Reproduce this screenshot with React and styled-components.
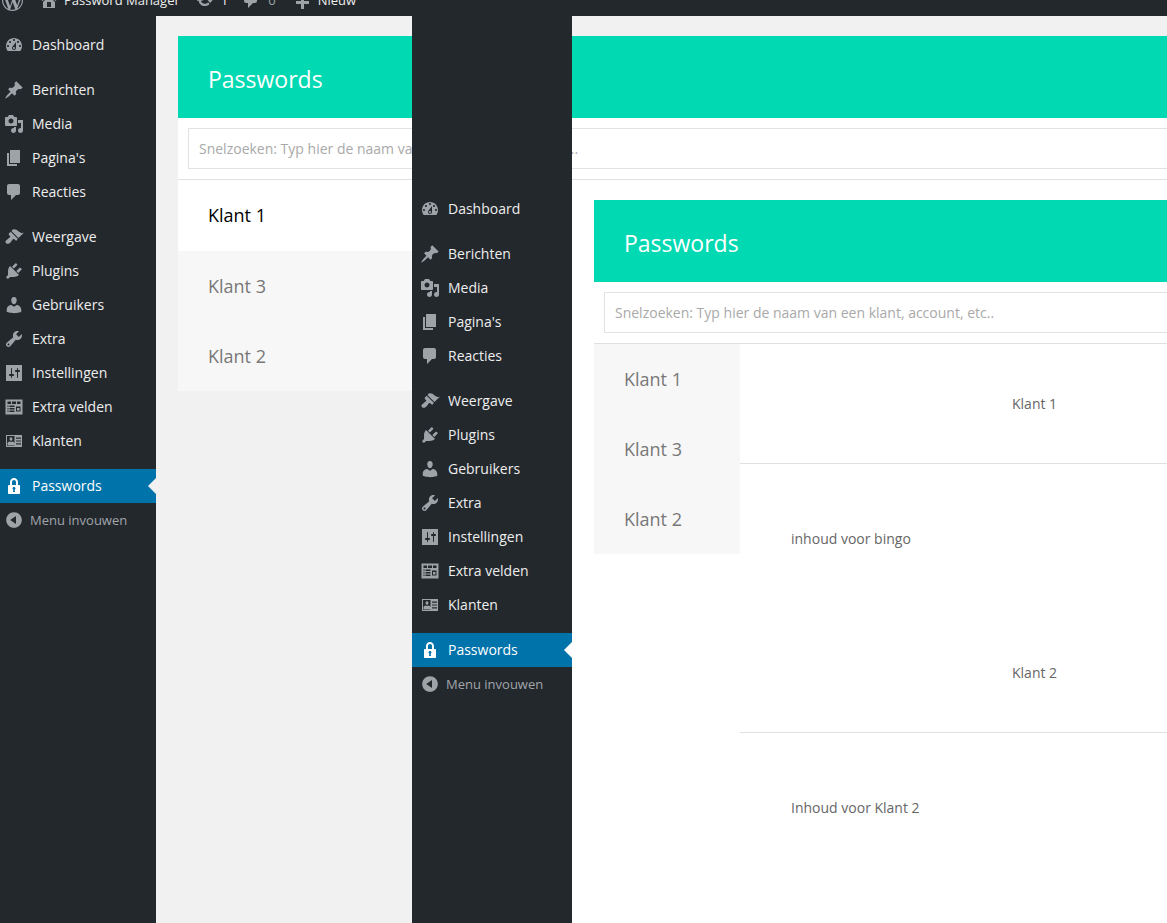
import styled, { createGlobalStyle } from "styled-components";

const ICONS = {
  wordpress:
    "M20 10c0-5.51-4.49-10-10-10C4.48 0 0 4.49 0 10c0 5.52 4.48 10 10 10 5.51 0 10-4.48 10-10zM7.78 15.37L4.37 6.22c.55-.02 1.17-.08 1.17-.08.5-.06.44-1.13-.06-1.11 0 0-1.45.11-2.37.11-.18 0-.37 0-.58-.01C4.12 2.69 6.87 1.11 10 1.11c2.33 0 4.45.87 6.05 2.34-.68-.11-1.65.39-1.65 1.58 0 .74.45 1.36.9 2.1.35.61.55 1.36.55 2.46 0 1.49-1.4 5-1.4 5l-3.03-8.37c.54-.02.82-.17.82-.17.5-.05.44-1.25-.06-1.22 0 0-1.44.12-2.38.12-.87 0-2.33-.12-2.33-.12-.5-.03-.56 1.2-.06 1.22l.92.08 1.26 3.41zM17.41 10c.24-.64.74-1.87.43-4.25.7 1.29 1.05 2.71 1.05 4.25 0 3.29-1.73 6.24-4.4 7.78.97-2.59 1.94-5.2 2.92-7.78zM6.1 18.09C3.12 16.65 1.11 13.53 1.11 10c0-1.3.23-2.48.72-3.59C3.25 10.3 4.67 14.2 6.1 18.09zm4.03-6.63l2.58 6.98c-.86.29-1.76.45-2.71.45-.79 0-1.57-.11-2.29-.33.81-2.38 1.62-4.74 2.42-7.1z",
  home: "M16 8.5l1.53 1.53-1.06 1.06L10 4.62l-6.47 6.47-1.06-1.06L10 2.5l4 4v-2h2v4zm-6-2.46l6 5.99V18H4v-5.97zM12 17v-5H8v5h4z",
  update:
    "M10.2 3.28c3.53 0 6.43 2.61 6.92 6h2.08l-3.5 4-3.5-4h2.32c-.45-1.97-2.21-3.44-4.32-3.44-1.45 0-2.73.71-3.54 1.78L4.95 5.66C6.23 4.2 8.11 3.28 10.2 3.28zm-.4 13.44c-3.52 0-6.43-2.61-6.92-6H.8l3.5-4c1.17 1.33 2.33 2.67 3.5 4H5.48c.45 1.97 2.21 3.44 4.32 3.44 1.45 0 2.73-.71 3.54-1.78l1.71 1.95c-1.28 1.46-3.15 2.39-5.25 2.39z",
  comment: "M5 2h9c1.1 0 2 .9 2 2v7c0 1.1-.9 2-2 2h-2l-5 5v-5H5c-1.1 0-2-.9-2-2V4c0-1.1.9-2 2-2z",
  plus: "M17 7v3h-5v5H9v-5H4V7h5V2h3v5h5z",
  dashboard:
    "M3.76 16h12.48c1.1-1.37 1.76-3.11 1.76-5 0-4.42-3.58-8-8-8s-8 3.58-8 8c0 1.89.66 3.63 1.76 5zM10 4c.55 0 1 .45 1 1s-.45 1-1 1-1-.45-1-1 .45-1 1-1zM6 6c.55 0 1 .45 1 1s-.45 1-1 1-1-.45-1-1 .45-1 1-1zm8 0c.55 0 1 .45 1 1s-.45 1-1 1-1-.45-1-1 .45-1 1-1zm-5.37 5.55L12 7v6c0 1.1-.9 2-2 2s-2-.9-2-2c0-.57.24-1.08.63-1.45zM4 10c.55 0 1 .45 1 1s-.45 1-1 1-1-.45-1-1 .45-1 1-1zm12 0c.55 0 1 .45 1 1s-.45 1-1 1-1-.45-1-1 .45-1 1-1zm-5 3c0-.55-.45-1-1-1s-1 .45-1 1 .45 1 1 1 1-.45 1-1z",
  pin: "M10.44 3.02l1.82-1.82 6.36 6.35-1.83 1.82c-1.05-.68-2.48-.57-3.41.36l-.75.75c-.92.93-1.04 2.35-.35 3.41l-1.83 1.82-2.41-2.41-2.8 2.79c-.42.42-3.38 2.71-3.8 2.29s1.86-3.39 2.28-3.81l2.79-2.79L4.1 9.36l1.83-1.82c1.05.69 2.48.57 3.4-.36l.75-.75c.93-.92 1.05-2.35.36-3.41z",
  media:
    "M13 11V4c0-.55-.45-1-1-1h-1.67L9 1H5L3.67 3H2c-.55 0-1 .45-1 1v7c0 .55.45 1 1 1h10c.55 0 1-.45 1-1zM7 4.5c1.38 0 2.5 1.12 2.5 2.5S8.38 9.5 7 9.5 4.5 8.38 4.5 7 5.62 4.5 7 4.5zM14 6h5v10.5c0 1.38-1.12 2.5-2.5 2.5S14 17.88 14 16.5s1.12-2.5 2.5-2.5c.17 0 .34.02.5.05V9h-3V6zm-4 8.05V13h2v3.5c0 1.38-1.12 2.5-2.5 2.5S7 17.88 7 16.5 8.12 14 9.5 14c.17 0 .34.02.5.05z",
  page: "M6 15V2h10v13H6zm-1 1h8v2H3V5h2v11z",
  brush:
    "M14.48 11.06L7.41 3.99l1.5-1.5c.5-.56 2.3-.47 3.51.32 1.21.8 1.43 1.28 2.91 2.1 1.18.64 2.45 1.26 4.45.85zm-.71.71L6.7 4.7 4.93 6.47c-.39.39-.39 1.02 0 1.41l1.06 1.06c.39.39.39 1.03 0 1.42-.6.6-1.43 1.11-2.21 1.69-.35.26-.7.53-1.01.84C1.43 13.23.91 15.01 2.1 16.2c1.19 1.19 2.97.67 4.31-.68.31-.31.58-.66.84-1.01.58-.78 1.09-1.61 1.69-2.21.39-.39 1.02-.39 1.41 0l1.06 1.06c.39.39 1.02.39 1.41 0z",
  plug: "M13.11 4.36L9.87 7.6 8 5.73l3.24-3.24c.35-.34 1.05-.2 1.56.32.52.51.66 1.21.31 1.55zm-8 1.77l.91-1.12 9.01 9.01-1.19.84c-.71.71-2.63 1.16-3.82 1.16H6.14L4.9 17.26c-.59.59-1.54.59-2.12 0-.59-.58-.59-1.53 0-2.12l1.24-1.24v-3.88c0-1.13.4-3.19 1.09-3.89zm7.26 3.97l3.24-3.24c.34-.35 1.04-.21 1.55.31.52.51.66 1.21.31 1.55l-3.24 3.25z",
  user: "M10 9.25c-2.27 0-2.73-3.44-2.73-3.44C7 4.02 7.82 2 9.97 2c2.16 0 2.98 2.02 2.71 3.81 0 0-.41 3.44-2.68 3.44zm0 2.57L12.72 10c2.39 0 4.52 2.33 4.52 4.53v2.49s-3.65 1.13-7.24 1.13c-3.65 0-7.24-1.13-7.24-1.13v-2.49c0-2.25 1.94-4.48 4.47-4.48z",
  wrench:
    "M16.68 9.77c-1.34 1.34-3.3 1.67-4.95.99l-5.41 6.52c-.99.99-2.59.99-3.58 0s-.99-2.59 0-3.57l6.52-5.42c-.68-1.65-.35-3.61.99-4.95 1.28-1.28 3.12-1.62 4.72-1.06l-2.89 2.89 2.82 2.82 2.86-2.87c.53 1.58.18 3.39-1.08 4.65zM3.81 16.21c.4.39 1.04.39 1.43 0 .4-.4.4-1.04 0-1.43-.39-.4-1.03-.4-1.43 0-.39.39-.39 1.03 0 1.43z",
  settings:
    "M18 18V2H2v16h16zM8 11h1c.55 0 1 .45 1 1s-.45 1-1 1H8v1.5c0 .28-.22.5-.5.5s-.5-.22-.5-.5V13H6c-.55 0-1-.45-1-1s.45-1 1-1h1V5.5c0-.28.22-.5.5-.5s.5.22.5.5V11zm5-2h-1c-.55 0-1-.45-1-1s.45-1 1-1h1V5.5c0-.28.22-.5.5-.5s.5.22.5.5V7h1c.55 0 1 .45 1 1s-.45 1-1 1h-1v5.5c0 .28-.22.5-.5.5s-.5-.22-.5-.5V9z",
  table:
    "M1.5 2.5h17v15h-17v-15zM3.5 4.5v2.5h3.500V4.500H3.500zM8 4.500V7h4V4.500H8zM13 4.500V7h3.500V4.500H13zM3.500 8.500v1.500h1V8.500h-1zM5.500 8.500v1.500h5V8.500h-5zM3.500 11v1.500h1V11h-1zM5.500 11v1.500h5V11h-5zM3.500 13.500V15h1v-1.500h-1zM5.500 13.500V15h5v-1.500h-5zM12 9.500v5h4.500v-5H12zM13 11h2.500v2.500H13V11z",
  idcard:
    "M2 4h16v12H2V4zM3 5v10h7.500V5H3zM7 6.200c1 0 1.600.9 1.400 2-.1.8-.6 1.500-1.400 1.500s-1.300-.7-1.400-1.500c-.2-1.100.4-2 1.400-2zM3.500 14.500v-2.100c0-1 1-2 2-2l1.500.6 1.500-.6c1 0 2 1 2 2v2.100h-7zM12 6.500h5v1.200h-5V6.500zM12 9.400h5v1.200h-5V9.400zM12 12.300h5v1.200h-5v-1.200z",
  lock: "M14 9h1c.55 0 1 .45 1 1v7c0 .55-.45 1-1 1H5c-.55 0-1-.45-1-1v-7c0-.55.45-1 1-1h1V6c0-2.2 1.8-4 4-4s4 1.8 4 4v3zm-2 0V6c0-1.1-.9-2-2-2s-2 .9-2 2v3h4zm-1 7l-.36-2.15c.51-.24.86-.75.86-1.35 0-.83-.67-1.5-1.5-1.5s-1.5.67-1.5 1.5c0 .6.35 1.11.86 1.35L9 16h2z",
  collapse:
    "M10 2.16c4.33 0 7.84 3.51 7.84 7.84s-3.51 7.84-7.84 7.84S2.16 14.33 2.16 10 5.71 2.16 10 2.16zm2 11.72V6.12L6.18 9.97z",
};

const MENU = [
  [{ icon: "dashboard", label: "Dashboard" }],
  [
    { icon: "pin", label: "Berichten" },
    { icon: "media", label: "Media" },
    { icon: "page", label: "Pagina's" },
    { icon: "comment", label: "Reacties" },
  ],
  [
    { icon: "brush", label: "Weergave" },
    { icon: "plug", label: "Plugins" },
    { icon: "user", label: "Gebruikers" },
    { icon: "wrench", label: "Extra" },
    { icon: "settings", label: "Instellingen" },
    { icon: "table", label: "Extra velden" },
    { icon: "idcard", label: "Klanten" },
  ],
];

const CLIENTS = ["Klant 1", "Klant 3", "Klant 2"];

const GlobalStyle = createGlobalStyle`
  html, body {
    margin: 0;
    height: 100%;
    overflow: hidden;
    background: #fff;
    font-family: "Open Sans", "Liberation Sans", sans-serif;
  }
`;

const Page = styled.div`
  position: relative;
  height: 939px;
  margin-top: -16px;
`;

const AdminBar = styled.header`
  display: flex;
  align-items: center;
  height: 32px;
  background: #23282d;
  font-size: 13px;
`;

const BarItem = styled.span`
  display: flex;
  align-items: center;
  gap: ${(p) => p.$gap}px;
  margin-left: ${(p) => p.$left}px;
  color: ${(p) => (p.$dim ? "#9ea3a8" : "#eee")};
  white-space: nowrap;
`;

const Icon = styled.svg`
  flex: none;
  width: ${(p) => p.$size || 20}px;
  height: ${(p) => p.$size || 20}px;
  margin-top: ${(p) => p.$drop || 0}px;
  fill: ${(p) => p.$color || "#9ea3a8"};
`;

const Screen = styled.div`
  display: flex;
  height: 907px;
`;

const Overlay = styled(Screen)`
  position: absolute;
  top: 32px;
  left: 412px;
  right: 0;
`;

const Sidebar = styled.nav`
  flex: none;
  width: 160px;
  margin-left: ${(p) => p.$shift || 0}px;
  padding-top: ${(p) => p.$top}px;
  background: #23282d;
  box-sizing: border-box;
`;

const MenuGroup = styled.ul`
  margin: 0 0 ${(p) => (p.$last ? 0 : 11)}px;
  padding: 0;
  list-style: none;
`;

const MenuItem = styled.li`
  position: relative;
  display: flex;
  align-items: center;
  height: 34px;
  padding-left: 8px;
  gap: 8px;
  font-size: 14px;
  background: ${(p) => (p.$active ? "#0073aa" : "transparent")};
  color: ${(p) => (p.$active ? "#fff" : "#eee")};
`;

const MenuLabel = styled.span`
  padding-bottom: 2px;
`;

const Notch = styled.span`
  position: absolute;
  right: 0;
  top: 50%;
  margin-top: -8px;
  border: 8px solid transparent;
  border-left-width: 0;
  border-right-color: ${(p) => p.$color};
`;

const CollapseRow = styled(MenuItem)`
  gap: 6px;
  font-size: 13px;
  color: #a0a5aa;
`;

const Main = styled.main`
  flex: 1;
  min-width: 0;
  overflow: hidden;
  box-sizing: border-box;
  margin-top: ${(p) => p.$top || 0}px;
  padding: 20px 0 0 22px;
  background: ${(p) => p.$bg};
`;

const Panel = styled.section`
  margin-right: -40px;
`;

const PanelHeader = styled.div`
  display: flex;
  align-items: center;
  box-sizing: border-box;
  height: 82px;
  padding: 3px 0 0 30px;
  background: #00d9b2;
  color: #fff;
  font-size: 23px;
`;

const SearchRow = styled.div`
  padding: 10px;
  background: #fff;
  border-bottom: 1px solid #e0e0e0;
`;

const SearchInput = styled.input`
  display: block;
  width: 100%;
  height: 41px;
  box-sizing: border-box;
  padding: 0 10px;
  border: 1.5px solid #e2e2e2;
  outline: none;
  background: #fff;
  font-family: inherit;
  font-size: 14px;

  &::placeholder {
    color: #a9a9a9;
    opacity: 1;
  }
`;

const Body = styled.div`
  display: flex;
  align-items: flex-start;
`;

const TabList = styled.ul`
  flex: ${(p) => (p.$wide ? "1" : "none")};
  width: ${(p) => (p.$wide ? "auto" : "146px")};
  margin: 0;
  padding: 0;
  list-style: none;
  background: #f7f7f7;
`;

const Tab = styled.li`
  display: flex;
  align-items: center;
  box-sizing: border-box;
  height: ${(p) => (p.$active ? 71 : 70)}px;
  padding: 0 0 ${(p) => (p.$active ? 1 : 0)}px 30px;
  font-size: 18px;
  color: ${(p) => (p.$active ? "#000" : "#777")};
  background: ${(p) => (p.$active ? "#fff" : "transparent")};
`;

const Accordion = styled.div`
  flex: 1;
  min-width: 0;
`;

const AccordionHead = styled.div`
  display: flex;
  align-items: center;
  box-sizing: border-box;
  height: 120px;
  padding-left: 272px;
  border-bottom: 1px solid #e0e0e0;
  font-size: 14px;
  color: #666;
`;

const AccordionBody = styled.div`
  display: flex;
  align-items: center;
  height: 149px;
  padding-left: 51px;
  font-size: 14px;
  color: #666;
`;

const Glyph = ({ name, size, color, drop }) => (
  <Icon viewBox="0 0 20 20" $size={size} $color={color} $drop={drop} fillRule="evenodd">
    <path d={ICONS[name]} />
  </Icon>
);

const WpMenu = ({ top, shift, notch }) => (
  <Sidebar $top={top} $shift={shift}>
    {MENU.map((group, i) => (
      <MenuGroup key={i}>
        {group.map(({ icon, label }) => (
          <MenuItem key={label}>
            <Glyph name={icon} />
            <MenuLabel>{label}</MenuLabel>
          </MenuItem>
        ))}
      </MenuGroup>
    ))}
    <MenuGroup $last>
      <MenuItem $active>
        <Glyph name="lock" color="#fff" />
        <MenuLabel>Passwords</MenuLabel>
        <Notch $color={notch} />
      </MenuItem>
      <CollapseRow>
        <Glyph name="collapse" />
        Menu invouwen
      </CollapseRow>
    </MenuGroup>
  </Sidebar>
);

const PasswordsHead = () => (
  <>
    <PanelHeader>Passwords</PanelHeader>
    <SearchRow>
      <SearchInput placeholder="Snelzoeken: Typ hier de naam van een klant, account, etc.." />
    </SearchRow>
  </>
);

const App = () => {
  return (
    <Page>
      <GlobalStyle />
      <AdminBar>
        <BarItem $left={2} $gap={0}>
          <Glyph name="wordpress" size={21} />
        </BarItem>
        <BarItem $left={16} $gap={5}>
          <Glyph name="home" />
          Password Manager
        </BarItem>
        <BarItem $left={16} $gap={7}>
          <Glyph name="update" size={18} />
          1
        </BarItem>
        <BarItem $left={13} $gap={7} $dim>
          <Glyph name="comment" />
          0
        </BarItem>
        <BarItem $left={16} $gap={6}>
          <Glyph name="plus" drop={8} />
          Nieuw
        </BarItem>
      </AdminBar>

      <Screen>
        <WpMenu top={12} shift={-4} notch="#f1f1f1" />
        <Main $bg="#f1f1f1">
          <Panel>
            <PasswordsHead />
            <Body>
              <TabList $wide>
                {CLIENTS.map((name, i) => (
                  <Tab key={name} $active={i === 0}>
                    {name}
                  </Tab>
                ))}
              </TabList>
            </Body>
          </Panel>
        </Main>
      </Screen>

      <Overlay>
        <WpMenu top={176} notch="#fff" />
        <Main $bg="#fff" $top={164}>
          <Panel>
            <PasswordsHead />
            <Body>
              <TabList>
                {CLIENTS.map((name) => (
                  <Tab key={name}>{name}</Tab>
                ))}
              </TabList>
              <Accordion>
                <AccordionHead>Klant 1</AccordionHead>
                <AccordionBody>inhoud voor bingo</AccordionBody>
                <AccordionHead>Klant 2</AccordionHead>
                <AccordionBody>Inhoud voor Klant 2</AccordionBody>
              </Accordion>
            </Body>
          </Panel>
        </Main>
      </Overlay>
    </Page>
  );
};

export default App;
